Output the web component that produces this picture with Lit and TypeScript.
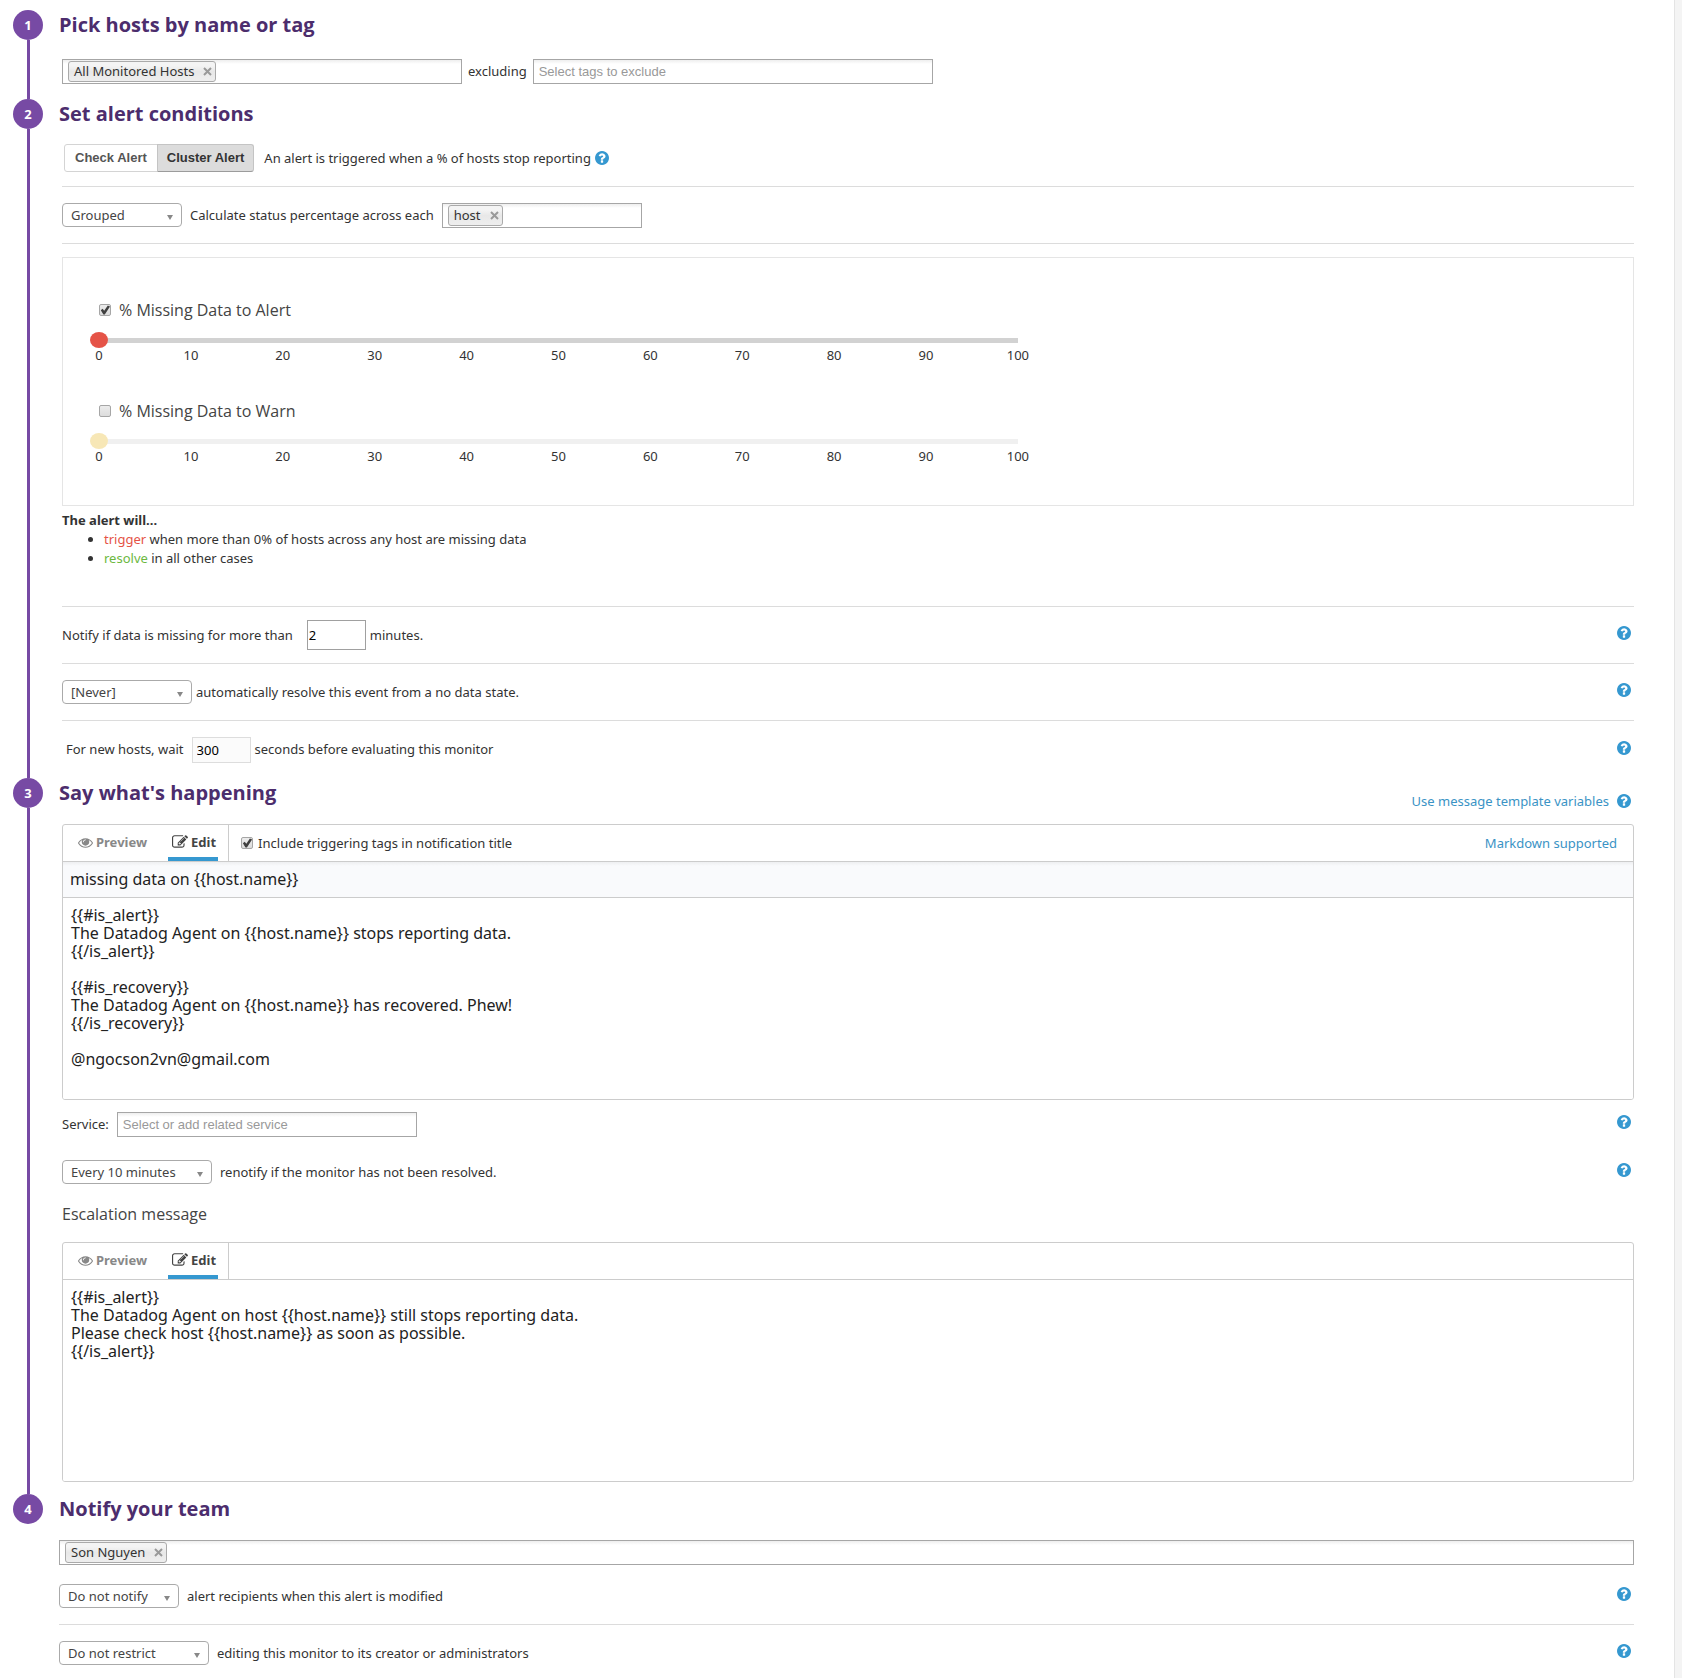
import { LitElement, html, css, svg, nothing, type TemplateResult } from "lit";
import { customElement, property, state } from "lit/decorators.js";
import { classMap } from "lit/directives/class-map.js";

const EYE = svg`<path d="M1664 960q-152-236-381-353 61 104 61 225 0 185-131.500 316.500t-316.500 131.500-316.500-131.500-131.500-316.500q0-121 61-225-229 117-381 353 133 205 333.500 326.500t434.500 121.500 434.500-121.500 333.500-326.500zm-720-384q0-20-14-34t-34-14q-125 0-214.500 89.500t-89.500 214.500q0 20 14 34t34 14 34-14 14-34q0-86 61-147t147-61q20 0 34-14t14-34zm848 384q0 34-20 69-140 230-376.500 368.500t-499.500 138.500-499.500-139-376.500-368q-20-35-20-69t20-69q140-229 376.500-368t499.500-139 499.500 139 376.500 368q20 35 20 69z"/>`;
const PENCIL = svg`<path d="M888 1184l116-116-152-152-116 116v56h96v96h56zm440-720q-16-16-33 1l-350 350q-17 17-1 33t33-1l350-350q17-17 1-33zm80 594v190q0 119-84.500 203.500t-203.500 84.500h-832q-119 0-203.500-84.500t-84.500-203.500v-832q0-119 84.500-203.500t203.500-84.500h832q63 0 117 25 15 7 18 23 3 17-9 29l-49 49q-14 14-32 8-23-6-45-6h-832q-66 0-113 47t-47 113v832q0 66 47 113t113 47h832q66 0 113-47t47-113v-126q0-13 9-22l64-64q15-15 35-7t20 29zm-96-738l288 288-672 672h-288v-288zm444 132l-92 92-288-288 92-92q28-28 68-28t68 28l152 152q28 28 28 68t-28 68z"/>`;
const QUESTION = svg`<path d="M1024 1376v-192q0-14-9-23t-23-9h-192q-14 0-23 9t-9 23v192q0 14 9 23t23 9h192q14 0 23-9t9-23zm256-672q0-88-55.500-163t-138.500-116-170-41q-243 0-371 213-15 24 8 42l132 100q7 6 19 6 16 0 25-12 53-68 86-92 34-24 86-24 48 0 85.500 26t37.500 59q0 38-20 61t-68 45q-63 28-115.500 86.500t-52.500 125.500v36q0 14 9 23t23 9h192q14 0 23-9t9-23q0-19 21.500-49.500t54.500-49.500q32-18 49-28.500t46-35 44.500-48 28-60.500 12.500-81zm384 192q0 209-103 385.500t-279.500 279.500-385.500 103-385.500-103-279.500-279.500-103-385.500 103-385.500 279.500-279.500 385.500-103 385.500 103 279.500 279.500 103 385.500z"/>`;

const base = css`
  *,
  *::before,
  *::after {
    box-sizing: border-box;
  }
  button,
  input,
  select,
  textarea {
    margin: 0;
    font: inherit;
    color: inherit;
  }
  button {
    padding: 0;
    border: 0;
    background: none;
    cursor: pointer;
  }
  .check {
    appearance: none;
    flex: none;
    display: grid;
    place-items: center;
    width: 12px;
    height: 12px;
    border: 1px solid #a6a6a6;
    border-radius: 2px;
    background: linear-gradient(#ececec, #dcdcdc);
  }
  .check:checked::before {
    content: "";
    width: 10px;
    height: 10px;
    background: #404040;
    clip-path: polygon(8% 52%, 26% 38%, 42% 58%, 78% 4%, 100% 14%, 48% 94%, 34% 94%);
  }
`;

@customElement("help-button")
class HelpButton extends LitElement {
  @property() label = "Help";

  static styles = [
    base,
    css`
      :host {
        display: flex;
        flex: none;
      }
      .help {
        display: flex;
      }
      .icon {
        width: 14px;
        height: 14px;
        fill: #3598d0;
      }
    `,
  ];

  render() {
    return html`<button class="help" type="button" aria-label=${this.label}>
      <svg class="icon" viewBox="128 128 1536 1536" aria-hidden="true">${QUESTION}</svg>
    </button>`;
  }
}

@customElement("tag-field")
class TagField extends LitElement {
  @property() label = "";
  @property() placeholder = "";
  @property() tag = "";

  static styles = [
    base,
    css`
      :host {
        display: block;
        min-width: 0;
      }
      .field {
        display: flex;
        align-items: center;
        height: 25px;
        padding: 0 5px;
        border: 1px solid #a6a6a6;
        background: linear-gradient(#eeeeee 0, #ffffff 4px);
      }
      .tag {
        display: flex;
        align-items: center;
        flex: none;
        gap: 9px;
        height: 21px;
        padding: 0 3px 0 5px;
        border: 1px solid #aaaaaa;
        border-radius: 3px;
        background: linear-gradient(#f4f4f4 20%, #e8e8e8 50%, #eeeeee);
        color: #333333;
        white-space: nowrap;
      }
      .remove {
        display: flex;
      }
      .cross {
        width: 9px;
        height: 9px;
        stroke: #999999;
        stroke-width: 2;
      }
      .entry {
        flex: 1;
        min-width: 0;
        height: 23px;
        padding: 0;
        border: 0;
        outline: 0;
        background: none;
        font-family: "Liberation Sans", Arial, sans-serif;
      }
      .entry::placeholder {
        color: #999999;
        opacity: 1;
      }
    `,
  ];

  render() {
    return html`<div class="field">
      ${this.tag
        ? html`<span class="tag"
            >${this.tag}<button class="remove" type="button" aria-label="Remove ${this.tag}">
              <svg class="cross" viewBox="0 0 9 9" aria-hidden="true">
                <path d="M1 1L8 8M8 1L1 8" />
              </svg></button
          ></span>`
        : nothing}
      <input class="entry" type="text" aria-label=${this.label} placeholder=${this.placeholder} />
    </div>`;
  }
}

@customElement("threshold-slider")
class ThresholdSlider extends LitElement {
  @property() label = "";
  @property() tone = "alert";
  @property({ type: Boolean }) enabled = false;

  static styles = [
    base,
    css`
      :host {
        display: block;
      }
      .title {
        display: inline-flex;
        align-items: center;
        gap: 8px;
        margin-left: 9px;
        font-family: "Open Sans", "Noto Sans", sans-serif;
        font-size: 16px;
        line-height: 24px;
        color: #444444;
      }
      .range {
        appearance: none;
        display: block;
        width: 100%;
        height: 18px;
        margin-top: 9px;
        background: linear-gradient(#d2d2d2, #d2d2d2) center / calc(100% - 18px) 5px no-repeat;
      }
      .range::-webkit-slider-thumb {
        appearance: none;
        width: 18px;
        height: 16px;
        border-radius: 50%;
        background: #e55347;
      }
      .warn .range {
        background-image: linear-gradient(#f0f0f0, #f0f0f0);
      }
      .warn .range::-webkit-slider-thumb {
        background: #f7e7b6;
      }
      .ticks {
        display: flex;
        justify-content: space-between;
        margin: -2px -8px 0;
        line-height: 16px;
      }
      .tick {
        width: 34px;
        text-align: center;
      }
    `,
  ];

  render() {
    const ticks = Array.from({ length: 11 }, (_, i) => i * 10);
    return html`<div class=${classMap({ warn: this.tone === "warn" })}>
      <label class="title">
        <input
          class="check"
          type="checkbox"
          .checked=${this.enabled}
          @change=${(e: Event) => (this.enabled = (e.target as HTMLInputElement).checked)}
        />
        ${this.label}
      </label>
      <input class="range" type="range" min="0" max="100" value="0" aria-label=${this.label} />
      <div class="ticks">${ticks.map((t) => html`<span class="tick">${t}</span>`)}</div>
    </div>`;
  }
}

@customElement("message-editor")
class MessageEditor extends LitElement {
  @property() label = "";
  @property() subject = "";
  @property() message = "";
  @property({ type: Boolean }) tagged = false;

  static styles = [
    base,
    css`
      :host {
        display: block;
      }
      .editor {
        border: 1px solid #cccccc;
        border-radius: 3px;
        overflow: hidden;
      }
      .bar {
        display: flex;
        align-items: center;
        height: 37px;
        border-bottom: 1px solid #cccccc;
      }
      .tabs {
        display: flex;
        gap: 20px;
        height: 36px;
        padding: 0 10px 0 14px;
        border-right: 1px solid #cccccc;
      }
      .tab {
        display: flex;
        align-items: center;
        gap: 3px;
        padding: 0 1px;
        border-top: 2px solid transparent;
        border-bottom: 4px solid transparent;
        color: #888888;
        font-weight: 700;
      }
      .active {
        padding: 0 2px 0 4px;
        border-bottom-color: #3598d0;
        color: #444444;
      }
      .icon {
        width: 15px;
        height: 15px;
        fill: currentColor;
      }
      .active .icon {
        width: 16px;
        height: 16px;
      }
      .option {
        display: flex;
        align-items: center;
        gap: 5px;
        padding-left: 12px;
      }
      .link {
        margin-left: auto;
        padding-right: 16px;
        color: #3a93c5;
        text-decoration: none;
      }
      .subject {
        display: block;
        width: 100%;
        height: 36px;
        padding: 0 7px 2px;
        border: 0;
        border-bottom: 1px solid #cccccc;
        outline: 0;
        background: linear-gradient(#eeeff1 0, #f9fafc 4px);
        font-size: 16px;
        color: #222222;
      }
      .body {
        display: block;
        width: 100%;
        height: 201px;
        padding: 8px;
        border: 0;
        outline: 0;
        resize: none;
        background: #ffffff;
        font-size: 16px;
        line-height: 18px;
        color: #222222;
      }
    `,
  ];

  render() {
    return html`<div class="editor">
      <div class="bar">
        <div class="tabs">
          <button class="tab" type="button">
            <svg class="icon" viewBox="0 0 1792 1792" aria-hidden="true">${EYE}</svg>Preview
          </button>
          <button class="tab active" type="button">
            <svg class="icon" viewBox="0 0 1792 1792" aria-hidden="true">${PENCIL}</svg>Edit
          </button>
        </div>
        ${this.tagged
          ? html`<label class="option"
                ><input class="check" type="checkbox" .checked=${true} />Include triggering tags in notification
                title</label
              ><a class="link" href="#markdown">Markdown supported</a>`
          : nothing}
      </div>
      ${this.subject
        ? html`<input class="subject" type="text" aria-label="Notification title" .value=${this.subject} />`
        : nothing}
      <textarea class="body" aria-label=${this.label} spellcheck="false" .value=${this.message}></textarea>
    </div>`;
  }
}

const ALERT_MESSAGE = [
  "{{#is_alert}}",
  "The Datadog Agent on {{host.name}} stops reporting data.",
  "{{/is_alert}}",
  "",
  "{{#is_recovery}}",
  "The Datadog Agent on {{host.name}} has recovered. Phew!",
  "{{/is_recovery}}",
  "",
  "@ngocson2vn@gmail.com",
].join("\n");

const ESCALATION_MESSAGE = [
  "{{#is_alert}}",
  "The Datadog Agent on host {{host.name}} still stops reporting data.",
  "Please check host {{host.name}} as soon as possible.",
  "{{/is_alert}}",
].join("\n");

@customElement("app-root")
class AppRoot extends LitElement {
  @state() private mode = "Cluster Alert";

  static styles = [
    base,
    css`
      :host {
        display: flex;
        min-height: 100vh;
        background: #ffffff;
        color: #333333;
        font: 13px/19px "Noto Sans", "Open Sans", sans-serif;
      }
      .page {
        flex: 1;
        min-width: 0;
        padding: 10px 40px 0 13px;
      }
      .edge {
        flex: none;
        width: 8px;
        border-left: 1px solid #e4e4e4;
        background: #f4f4f4;
      }
      .step {
        display: flex;
        gap: 16px;
      }
      .rail {
        display: flex;
        flex-direction: column;
        flex: none;
        width: 30px;
      }
      .number {
        display: grid;
        place-items: center;
        height: 30px;
        border-radius: 50%;
        background: #774aa4;
        color: #ffffff;
        font-weight: 700;
      }
      .line {
        flex: 1;
        width: 3px;
        margin-left: 14px;
        background: #774aa4;
      }
      .content {
        flex: 1;
        min-width: 0;
      }
      .heading {
        margin: 0;
        color: #4c2d6d;
        font: 700 20px/30px "Open Sans", "Noto Sans", sans-serif;
      }
      .inset {
        padding-left: 3px;
      }
      .hosts {
        display: flex;
        align-items: center;
        gap: 6px;
        padding-top: 19px;
        padding-bottom: 15px;
      }
      .hosts .wide {
        flex: 0 1 400px;
      }
      .row {
        display: flex;
        align-items: center;
        gap: 8px;
        min-height: 57px;
        border-bottom: 1px solid #dcdcdc;
      }
      .conditions {
        padding-top: 1px;
      }
      .plain {
        border-bottom: 0;
      }
      .short {
        min-height: 48px;
      }
      .last {
        min-height: 0;
        padding: 16px 0 10px;
      }
      .tight {
        gap: 4px;
      }
      .lead {
        padding: 0 4px;
      }
      .trail {
        padding-right: 10px;
      }
      .end {
        margin-left: auto;
        padding-right: 3px;
      }
      .row .end {
        padding-bottom: 4px;
      }
      .modes {
        display: flex;
        margin: 0 2px;
      }
      .mode {
        height: 28px;
        padding: 0 10px;
        border: 1px solid #d4d4d4;
        border-radius: 3px 0 0 3px;
        background: #ffffff;
        font: 700 13px/26px "Liberation Sans", Arial, sans-serif;
        color: #555555;
      }
      .mode + .mode {
        margin-left: -1px;
        padding: 0 9px;
        border-radius: 0 3px 3px 0;
      }
      .chosen {
        border-color: #c4c4c4 #c4c4c4 #9c9c9c;
        background: #dcdcdc;
        color: #333333;
      }
      .hint {
        display: flex;
        align-items: center;
        gap: 4px;
      }
      .picker {
        appearance: none;
        height: 24px;
        padding: 0 24px 0 8px;
        border: 1px solid #aaaaaa;
        border-radius: 4px;
        background: #ffffff
          url("data:image/svg+xml,%3Csvg xmlns='http://www.w3.org/2000/svg' width='6' height='6'%3E%3Cpath d='M0 1h6L3 6z' fill='%23888'/%3E%3C/svg%3E")
          right 8px top 10px no-repeat;
        color: #444444;
      }
      .w120 {
        width: 120px;
      }
      .w130 {
        width: 130px;
      }
      .w150 {
        width: 150px;
      }
      .across {
        flex: 0 1 200px;
      }
      .panel {
        margin-top: 13px;
        padding: 40px 27px 41px;
        border: 1px solid #e5e5e5;
      }
      .sliders {
        display: flex;
        flex-direction: column;
        gap: 36px;
        max-width: 937px;
      }
      .summary {
        padding: 5px 0 38px;
        border-bottom: 1px solid #dcdcdc;
      }
      .cases {
        margin: 0;
        padding-left: 42px;
      }
      .trigger {
        color: #e55347;
      }
      .resolve {
        color: #6cb83f;
      }
      .number-box {
        width: 59px;
        height: 30px;
        padding: 0 1px;
        border: 1px solid #a0a0a0;
        outline: 0;
        background: #ffffff;
        color: #000000;
      }
      .soft {
        height: 26px;
        padding: 0 4px;
        border-color: #dddddd;
        background: #fbfbfb;
      }
      .top {
        display: flex;
        height: 46px;
      }
      .variables {
        display: flex;
        align-items: center;
        gap: 8px;
        color: #3a93c5;
      }
      .link {
        color: inherit;
        text-decoration: none;
      }
      .service {
        flex: 0 1 300px;
      }
      .subheading {
        margin: 0 0 10px;
        font: 400 16px/36px "Open Sans", "Noto Sans", sans-serif;
        color: #444444;
      }
      .escalation {
        padding-bottom: 12px;
      }
      .team {
        padding: 16px 0 3px;
      }
    `,
  ];

  private step(n: number, body: TemplateResult) {
    return html`<section class="step">
      <div class="rail">
        <span class="number">${n}</span>
        ${n < 4 ? html`<span class="line"></span>` : nothing}
      </div>
      <div class="content">${body}</div>
    </section>`;
  }

  private picker(id: string, value: string, width: string) {
    return html`<select class="picker ${width}" id=${id}>
      <option>${value}</option>
    </select>`;
  }

  render() {
    return html`
      <main class="page">
        ${this.step(
          1,
          html`<h2 class="heading">Pick hosts by name or tag</h2>
            <div class="inset hosts">
              <tag-field class="wide" label="Hosts to monitor" tag="All Monitored Hosts"></tag-field>
              <span>excluding</span>
              <tag-field class="wide" label="Tags to exclude" placeholder="Select tags to exclude"></tag-field>
            </div>`
        )}
        ${this.step(
          2,
          html`<h2 class="heading">Set alert conditions</h2>
            <div class="inset conditions">
              <div class="row">
                <div class="modes">
                  ${["Check Alert", "Cluster Alert"].map(
                    (m) =>
                      html`<button
                        class=${classMap({ mode: true, chosen: m === this.mode })}
                        type="button"
                        @click=${() => (this.mode = m)}
                      >
                        ${m}
                      </button>`
                  )}
                </div>
                <div class="hint">
                  An alert is triggered when a % of hosts stop reporting
                  <help-button></help-button>
                </div>
              </div>
              <div class="row">
                ${this.picker("grouping", "Grouped", "w120")}
                <label for="grouping">Calculate status percentage across each</label>
                <tag-field class="across" label="Group by" tag="host"></tag-field>
              </div>
              <div class="panel">
                <div class="sliders">
                  <threshold-slider label="% Missing Data to Alert" tone="alert" enabled></threshold-slider>
                  <threshold-slider label="% Missing Data to Warn" tone="warn"></threshold-slider>
                </div>
              </div>
              <div class="summary">
                <strong>The alert will...</strong>
                <ul class="cases">
                  <li>
                    <span class="trigger">trigger</span> when more than 0% of hosts across any host are missing data
                  </li>
                  <li><span class="resolve">resolve</span> in all other cases</li>
                </ul>
              </div>
              <div class="row tight">
                <label class="trail" for="missing">Notify if data is missing for more than</label>
                <input class="number-box" id="missing" type="text" value="2" />
                <span>minutes.</span>
                <help-button class="end"></help-button>
              </div>
              <div class="row tight">
                ${this.picker("autoresolve", "[Never]", "w130")}
                <label for="autoresolve">automatically resolve this event from a no data state.</label>
                <help-button class="end"></help-button>
              </div>
              <div class="row plain tight">
                <label class="lead" for="delay">For new hosts, wait</label>
                <input class="number-box soft" id="delay" type="text" value="300" />
                <span>seconds before evaluating this monitor</span>
                <help-button class="end"></help-button>
              </div>
            </div>`
        )}
        ${this.step(
          3,
          html`<div class="top">
              <h2 class="heading">Say what's happening</h2>
              <div class="variables end">
                <a class="link" href="#variables">Use message template variables</a>
                <help-button></help-button>
              </div>
            </div>
            <div class="inset escalation">
              <message-editor
                label="Message"
                subject="missing data on {{host.name}}"
                .message=${ALERT_MESSAGE}
                tagged
              ></message-editor>
              <div class="row plain short">
                <span>Service:</span>
                <tag-field class="service" label="Service" placeholder="Select or add related service"></tag-field>
                <help-button class="end"></help-button>
              </div>
              <div class="row plain short">
                ${this.picker("renotify", "Every 10 minutes", "w150")}
                <label for="renotify">renotify if the monitor has not been resolved.</label>
                <help-button class="end"></help-button>
              </div>
              <h3 class="subheading">Escalation message</h3>
              <message-editor label="Escalation message" .message=${ESCALATION_MESSAGE}></message-editor>
            </div>`
        )}
        ${this.step(
          4,
          html`<h2 class="heading">Notify your team</h2>
            <div class="team">
              <tag-field label="Team members" tag="Son Nguyen"></tag-field>
            </div>
            <div class="row">
              ${this.picker("modified", "Do not notify", "w120")}
              <label for="modified">alert recipients when this alert is modified</label>
              <help-button class="end"></help-button>
            </div>
            <div class="row plain last">
              ${this.picker("restrict", "Do not restrict", "w150")}
              <label for="restrict">editing this monitor to its creator or administrators</label>
              <help-button class="end"></help-button>
            </div>`
        )}
      </main>
      <div class="edge"></div>
    `;
  }
}
